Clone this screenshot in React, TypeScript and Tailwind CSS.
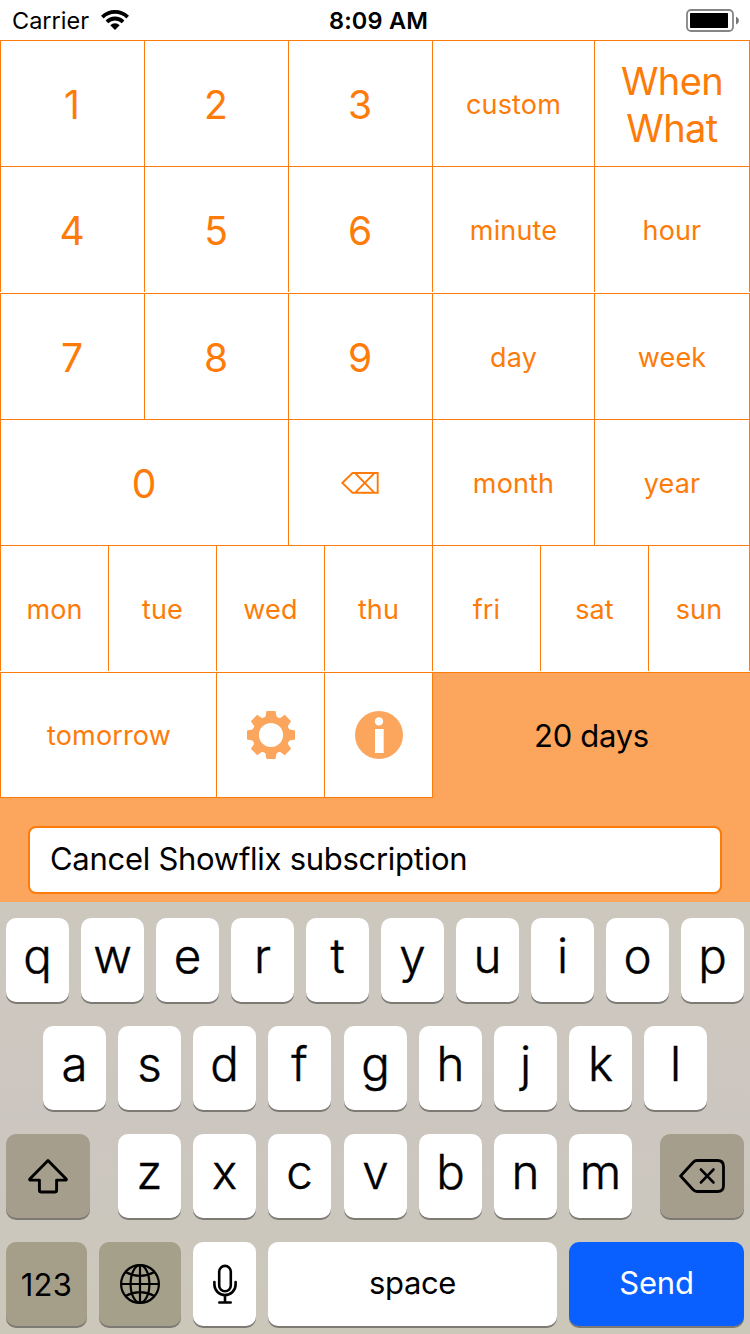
import type { ReactNode } from "react";

const LINE = "border-[#fd7b08]";

function Cell({ width, className = "", children }: { width: string; className?: string; children: ReactNode }) {
  return (
    <button
      className={`flex shrink-0 items-center justify-center border-t border-l ${LINE} bg-white text-[#fd7b08] ${width} ${className}`}
    >
      {children}
    </button>
  );
}

function Digit({ width = "w-[144px]", children }: { width?: string; children: ReactNode }) {
  return (
    <Cell width={width} className="pt-[4px] pr-px text-[39px]">
      {children}
    </Cell>
  );
}

function Word({ width, className = "", children }: { width: string; className?: string; children: ReactNode }) {
  return (
    <Cell width={width} className={`pt-[3px] text-[27px] tracking-[0.15px] ${className}`}>
      {children}
    </Cell>
  );
}

function Key({ width = "w-[63px]", tone = "bg-white", className = "", children }: { width?: string; tone?: string; className?: string; children: ReactNode }) {
  return (
    <button
      className={`flex h-[84px] shrink-0 items-center justify-center rounded-[10px] shadow-[0_2px_0_#7d7a74] ${tone} ${width} ${className}`}
    >
      {children}
    </button>
  );
}

function Letters({ text }: { text: string }) {
  return (
    <div className="flex gap-3">
      {text.split("").map((letter) => (
        <Key key={letter} className="pb-[9px] text-[47.5px] leading-none font-light [-webkit-text-stroke:0.45px_black]">
          {letter}
        </Key>
      ))}
    </div>
  );
}

function Wifi() {
  return (
    <svg width="28" height="20" viewBox="0 0 28 20" fill="none" stroke="#000" strokeWidth="3.8">
      <path d="M1.3 7.1 A18.2 18.2 0 0 1 26.7 7.1" />
      <path d="M5.9 11.8 A11.6 11.6 0 0 1 22.1 11.8" />
      <path d="M14 20 L9.3 15.3 A6.7 6.7 0 0 1 18.7 15.3 Z" fill="#000" stroke="none" />
    </svg>
  );
}

function Battery() {
  return (
    <svg width="53" height="23" viewBox="0 0 53 23">
      <rect x="1" y="1" width="46" height="21" rx="4" fill="none" stroke="#858585" strokeWidth="1.8" />
      <rect x="4" y="4" width="38" height="15" rx="0.8" fill="#000" />
      <path d="M50 7.5 Q53 9 53 11.5 T50 15.5 Z" fill="#777" />
    </svg>
  );
}

function Gear() {
  const angles = [0, 45, 90, 135, 180, 225, 270, 315];
  return (
    <svg width="48" height="48" viewBox="-24 -24 48 48" fill="#fca55d">
      <circle r="15.4" fill="none" stroke="#fca55d" strokeWidth="6.6" />
      {angles.map((angle) => (
        <path key={angle} d="M-4.5 -24 H4.5 L5.5 -18.6 L8 -16 H-8 L-5.5 -18.6 Z" transform={`rotate(${angle})`} />
      ))}
    </svg>
  );
}

function Info() {
  return (
    <svg width="48" height="48" viewBox="0 0 48 48">
      <circle cx="24" cy="24" r="24" fill="#fca55d" />
      <circle cx="24" cy="10.4" r="4.2" fill="#fff" />
      <rect x="20" y="18" width="8.7" height="24" fill="#fff" />
    </svg>
  );
}

function Clear() {
  return (
    <svg width="38" height="22" viewBox="0 0 38 22" fill="none" stroke="#fd7b08" strokeWidth="1.9">
      <path d="M1.3 11 L11.5 1 H36.7 V20.8 H11.5 Z M14 1 L33.5 20.8 M33.5 1 L14 20.8" />
    </svg>
  );
}

function Shift() {
  return (
    <svg width="40" height="35" viewBox="0 0 40 35" fill="none" stroke="#000" strokeWidth="2.9" strokeLinejoin="round">
      <path d="M20 1.6 L1.8 20 Q1.4 21.1 2.3 21.1 H11.4 V30.9 Q11.4 33 13.5 33 H26.5 Q28.6 33 28.6 30.9 V21.1 H37.7 Q38.6 21.1 38.2 20 Z" />
    </svg>
  );
}

function Delete() {
  return (
    <svg width="46" height="34" viewBox="0 0 46 34" fill="none" stroke="#000" strokeWidth="2.8" strokeLinejoin="round" strokeLinecap="round">
      <path d="M1.6 17 L14.2 3.2 Q15.8 1.5 18 1.5 H38.5 Q44.5 1.5 44.5 7.5 V26.5 Q44.5 32.5 38.5 32.5 H18 Q15.8 32.5 14.2 30.8 Z" />
      <path d="M22 10.6 L34.4 23.4 M34.4 10.6 L22 23.4" />
    </svg>
  );
}

function Globe() {
  return (
    <svg width="40" height="40" viewBox="-20 -20 40 40" fill="none" stroke="#000" strokeWidth="2.2">
      <circle r="18.9" />
      <ellipse rx="9.4" ry="18.9" />
      <path d="M-19 0 H19 M0 -19 V19 M-14.6 -12 Q0 -4.4 14.6 -12 M-14.6 12 Q0 4.4 14.6 12" />
    </svg>
  );
}

function Mic() {
  return (
    <svg width="24" height="40" viewBox="0 0 24 40" fill="none" stroke="#000" strokeWidth="2.6" strokeLinecap="round">
      <rect x="6.2" y="1.9" width="11.6" height="25.4" rx="5.8" />
      <path d="M1.4 18.1 V20.5 A10.6 10.6 0 0 0 22.6 20.5 V18.1 M12 31.3 V38 M6.3 38.5 H17.7" />
    </svg>
  );
}

export default function App() {
  return (
    <div className="flex h-[1334px] w-[750px] flex-col overflow-hidden bg-white font-['Inter',sans-serif] text-black">
      <header className="grid h-10 grid-cols-3 items-center text-[23.5px] leading-none">
        <div className="flex items-center gap-3 pl-3">
          <span className="pt-0.5">Carrier</span>
          <Wifi />
        </div>
        <span className="pt-0.5 pl-[7px] text-center font-semibold tracking-[0.2px]">8:09 AM</span>
        <div className="flex justify-end pt-px pr-[11px]">
          <Battery />
        </div>
      </header>

      <main className="flex flex-col">
        <div className="flex h-[126px]">
          <Digit>1</Digit>
          <Digit>2</Digit>
          <Digit>3</Digit>
          <Word width="w-[162px]">custom</Word>
          <Cell width="w-[156px]" className="border-r pt-[2px] text-[38px] leading-[47px] tracking-[-0.6px]">
            <span>
              When
              <br />
              What
            </span>
          </Cell>
        </div>
        <div className="flex h-[127px] pb-px">
          <Digit>4</Digit>
          <Digit>5</Digit>
          <Digit>6</Digit>
          <Word width="w-[162px]">minute</Word>
          <Word width="w-[156px]" className="border-r">hour</Word>
        </div>
        <div className="flex h-[126px]">
          <Digit>7</Digit>
          <Digit>8</Digit>
          <Digit>9</Digit>
          <Word width="w-[162px]">day</Word>
          <Word width="w-[156px]" className="border-r">week</Word>
        </div>
        <div className="flex h-[126px]">
          <Digit width="w-[288px]">0</Digit>
          <Cell width="w-[144px]" className="pr-0.5">
            <Clear />
          </Cell>
          <Word width="w-[162px]">month</Word>
          <Word width="w-[156px]" className="border-r">year</Word>
        </div>
        <div className="flex h-[127px] pb-px">
          <Word width="w-[108px]">mon</Word>
          <Word width="w-[108px]">tue</Word>
          <Word width="w-[108px]">wed</Word>
          <Word width="w-[108px]">thu</Word>
          <Word width="w-[108px]">fri</Word>
          <Word width="w-[108px]">sat</Word>
          <Word width="w-[102px]" className="border-r">sun</Word>
        </div>
        <div className="flex h-[126px] bg-[#fca55d]">
          <Word width="w-[216px]" className="border-b pl-px">tomorrow</Word>
          <Cell width="w-[108px]" className="border-b">
            <Gear />
          </Cell>
          <Cell width="w-[109px]" className="border-r border-b">
            <Info />
          </Cell>
          <div className={`flex flex-1 items-center justify-center border-t pt-px text-[31px] tracking-[-0.3px] ${LINE}`}>
            20 days
          </div>
        </div>
      </main>

      <div className="h-[104px] shrink-0 bg-[#fca55d] px-7 pt-7">
        <div className={`flex h-[68px] items-center rounded-lg border-2 bg-white pb-0.5 pl-5 text-[31px] tracking-[-0.28px] ${LINE}`}>
          Cancel Showflix subscription
        </div>
      </div>

      <footer className="flex flex-1 flex-col gap-6 bg-[#ccc7bc] bg-linear-to-b from-[#cdc8be] via-[#ccc6c0] to-[#cbc8ba] px-1.5 pt-4">
        <Letters text="qwertyuiop" />
        <div className="flex justify-center gap-[13px]">
          <Letters text="asdf" />
          <Letters text="ghjkl" />
        </div>
        <div className="flex justify-between">
          <Key width="w-[84px]" tone="bg-[#a69e8d]">
            <Shift />
          </Key>
          <div className="flex gap-[13px]">
            <Letters text="zxc" />
            <Letters text="vbnm" />
          </div>
          <Key width="w-[84px]" tone="bg-[#a69e8d]">
            <Delete />
          </Key>
        </div>
        <div className="flex gap-3 text-[31px] tracking-[-0.4px]">
          <Key width="w-[81px]" tone="bg-[#a59f89]" className="pt-[3px] tracking-[0.3px]">123</Key>
          <Key width="w-[82px]" tone="bg-[#a5a089]">
            <Globe />
          </Key>
          <Key>
            <Mic />
          </Key>
          <Key width="w-[289px]" className="pb-px">space</Key>
          <Key width="w-[175px]" tone="bg-[#0a60ff]" className="pb-px tracking-[-0.2px] text-white">Send</Key>
        </div>
      </footer>
    </div>
  );
}
